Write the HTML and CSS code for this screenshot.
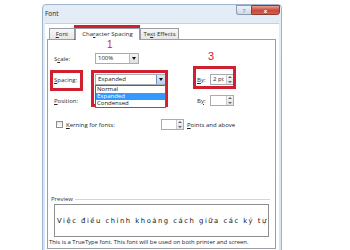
FILE: index.html
```html
<!DOCTYPE html>
<html lang="en">
<head>
    <meta charset="UTF-8">
    <title>Font - Character Spacing</title>
    <link rel="stylesheet" href="styles.css">
</head>
<body>
    <div class="window">
        <div class="titlebar">
            <span class="title">Font</span>
            <div class="caption">
                <span class="cap-btn help">?</span>
                <span class="cap-btn close">x</span>
            </div>
        </div>
        <div class="client">
            <div class="tabs">
                <span class="tab tab-font"><u>F</u>ont</span>
                <span class="tab active">Cha<u>r</u>acter Spacing</span>
                <span class="tab tab-effects">Te<u>x</u>t Effects</span>
            </div>
            <div class="panel">
                <div class="row">
                    <span class="label">S<u>c</u>ale:</span>
                    <span class="combo scale">100%<span class="arrow"></span></span>
                </div>
                <div class="row">
                    <span class="label"><u>S</u>pacing:</span>
                    <span class="combo spacing">Expanded<span class="arrow"></span>
                        <span class="droplist">
                            <span class="opt">Normal</span>
                            <span class="opt selected">Expanded</span>
                            <span class="opt">Condensed</span>
                        </span>
                    </span>
                    <span class="by"><u>B</u>y:</span>
                    <span class="spin">2 pt<span class="spin-btn"></span></span>
                </div>
                <div class="row">
                    <span class="label"><u>P</u>osition:</span>
                    <span class="combo empty"></span>
                    <span class="by">B<u>y</u>:</span>
                    <span class="spin"><span class="spin-btn"></span></span>
                </div>
                <div class="row kern">
                    <span class="check"></span>
                    <span class="kern-label"><u>K</u>erning for fonts:</span>
                    <span class="spin kern-spin"><span class="spin-btn"></span></span>
                    <span class="pts"><u>P</u>oints and above</span>
                </div>
                <div class="fill"></div>
                <div class="preview-head">Preview</div>
                <div class="preview-box">
                    <span class="preview-text">Việc điều chỉnh khoảng cách giữa các ký tự</span>
                </div>
                <div class="note">This is a TrueType font. This font will be used on both printer and screen.</div>
            </div>
        </div>
    </div>

    <div class="mark box-tab"></div>
    <div class="mark box-label"></div>
    <div class="mark box-combo"></div>
    <div class="mark box-by"></div>
    <span class="num num-1">1</span>
    <span class="num num-2">2</span>
    <span class="num num-3">3</span>
</body>
</html>
```

FILE: styles.css
```css
body {
    margin: 0;
    width: 350px;
    height: 250px;
    overflow: hidden;
    position: relative;
    background: #fff;
    font-family: "Open Sans", "Noto Sans", sans-serif;
    color: #1e1e1e;
}
u {
    text-decoration: underline;
    text-underline-offset: 1px;
}
.window {
    margin: 4px 0 0 42px;
    width: 240px;
    height: 252px;
    box-sizing: border-box;
    border: 1px solid #9fb4cf;
    border-radius: 4px 4px 0 0;
    background: linear-gradient(#e4ecf6, #d6e3f2);
}
.titlebar {
    height: 18px;
    display: flex;
    justify-content: space-between;
    padding: 0 1px 0 2px;
}
.title {
    font-size: 6.5px;
    line-height: 18px;
    color: #222;
}
.caption {
    display: flex;
    align-items: flex-start;
}
.cap-btn {
    height: 10px;
    font-size: 6px;
    line-height: 10px;
    text-align: center;
    box-sizing: border-box;
    border: 1px solid #8d9bb0;
}
.help {
    width: 15px;
    color: #5d6f8a;
    background: linear-gradient(#eef3f9, #cdd9e8);
    border-radius: 0 0 0 3px;
    border-right: none;
}
.close {
    width: 29px;
    color: #fff;
    font-weight: bold;
    background: linear-gradient(#e5a091, #c9483a 55%, #d0614d);
    border-color: #8c3a33;
    border-radius: 0 0 3px 0;
}
.client {
    margin: 0 2px;
    height: 229px;
    background: #fff;
    padding: 4px 3px 0 2px;
    border-top: 1px solid #c2d1e3;
}
.tabs {
    display: flex;
    height: 11px;
    padding-left: 2px;
    position: relative;
    z-index: 1;
}
.tab {
    font-size: 6px;
    line-height: 10px;
    height: 11px;
    box-sizing: border-box;
    border: 1px solid #9a9ea6;
    border-bottom: none;
    background: linear-gradient(#f7f7f7, #e6e6e6);
    text-align: center;
    color: #2a2a2a;
}
.tab-font {
    width: 26px;
}
.active {
    width: 65px;
    background: #fff;
    height: 12px;
}
.tab-effects {
    width: 39px;
}
.panel {
    height: 210px;
    box-sizing: border-box;
    border: 1px solid #9a9ea6;
    display: flex;
    flex-direction: column;
    padding: 13px 4px 0 6px;
    font-size: 6px;
}
.row {
    display: grid;
    grid-template-columns: 41px 72px 30px 13px 24px;
    align-items: center;
    height: 11px;
    margin-bottom: 10px;
}
.label,
.by {
    color: #2a2a2a;
}
.by {
    grid-column: 4;
}
.combo {
    position: relative;
    height: 11px;
    box-sizing: border-box;
    border: 1px solid #a8abb2;
    line-height: 9px;
    padding-left: 2px;
    background: #fff;
}
.scale {
    width: 44px;
}
.spacing {
    width: 71px;
}
.empty {
    border: none;
}
.arrow {
    position: absolute;
    right: 0;
    top: 0;
    width: 9px;
    height: 9px;
    box-sizing: border-box;
    border-left: 1px solid #b9bcc2;
    background: linear-gradient(#f4f4f4, #dedede);
}
.arrow::after {
    content: "";
    position: absolute;
    left: 2px;
    top: 3px;
    border-left: 2px solid transparent;
    border-right: 2px solid transparent;
    border-top: 3px solid #111;
}
.spacing .arrow {
    background: linear-gradient(#dbe9f7, #b9d3ee);
    border-left-color: #6c93bf;
}
.droplist {
    position: absolute;
    left: -1px;
    top: 10px;
    width: 71px;
    box-sizing: border-box;
    border: 1px solid #646464;
    background: #fff;
    display: flex;
    flex-direction: column;
    z-index: 2;
}
.opt {
    height: 7px;
    line-height: 7px;
    padding-left: 1px;
    color: #111;
}
.selected {
    background: #3399ff;
    color: #fff;
}
.spin {
    position: relative;
    height: 11px;
    box-sizing: border-box;
    border: 1px solid #a8abb2;
    line-height: 9px;
    padding-left: 2px;
    background: #fff;
}
.spin-btn {
    position: absolute;
    right: 0;
    top: 0;
    width: 7px;
    height: 9px;
    box-sizing: border-box;
    border-left: 1px solid #c9cbd0;
    background: linear-gradient(#f6f6f6, #e4e4e4);
}
.spin-btn::before,
.spin-btn::after {
    content: "";
    position: absolute;
    left: 1px;
    border-left: 2px solid transparent;
    border-right: 2px solid transparent;
}
.spin-btn::before {
    top: 1px;
    border-bottom: 2px solid #666;
}
.spin-btn::after {
    bottom: 1px;
    border-top: 2px solid #666;
}
.kern {
    display: flex;
    margin-top: 3px;
    padding-left: 2px;
}
.check {
    width: 7px;
    height: 7px;
    box-sizing: border-box;
    border: 1px solid #8f8f8f;
    background: linear-gradient(#e8e8e8, #fdfdfd);
    margin-right: 3px;
}
.kern-label {
    width: 95px;
}
.kern-spin {
    width: 23px;
    margin-right: 3px;
}
.fill {
    flex: 1;
}
.preview-head {
    display: flex;
    align-items: center;
    gap: 2px;
    height: 8px;
    margin: 0 1px 1px -3px;
    color: #333;
}
.preview-head::after {
    content: "";
    flex: 1;
    border-top: 1px solid #d5d5d5;
}
.preview-box {
    height: 33px;
    margin: 0 2px 0 0;
    box-sizing: border-box;
    border: 1px solid #8e8e8e;
    overflow: hidden;
    white-space: nowrap;
    display: flex;
    align-items: center;
    padding-left: 2px;
}
.preview-text {
    font-family: "DejaVu Sans", sans-serif;
    font-size: 6.8px;
    letter-spacing: 1.52px;
    color: #111;
}
.note {
    font-size: 5.9px;
    line-height: 11px;
    margin-left: -5px;
    color: #222;
    white-space: nowrap;
}
.mark {
    position: absolute;
    box-sizing: border-box;
    border: 3px solid #cf2030;
}
.box-tab {
    left: 74px;
    top: 25px;
    width: 66px;
    height: 15px;
}
.box-label {
    left: 50px;
    top: 70px;
    width: 33px;
    height: 21px;
}
.box-combo {
    left: 91px;
    top: 70px;
    width: 77px;
    height: 37px;
}
.box-by {
    left: 193px;
    top: 66px;
    width: 43px;
    height: 23px;
}
.num {
    position: absolute;
    color: #c8262e;
    font-family: "Liberation Sans", sans-serif;
    font-size: 11px;
    line-height: 11px;
}
.num-1 {
    left: 107px;
    top: 39px;
    font-size: 10px;
}
.num-2 {
    left: 132px;
    top: 84px;
}
.num-3 {
    left: 208px;
    top: 51px;
}
```
